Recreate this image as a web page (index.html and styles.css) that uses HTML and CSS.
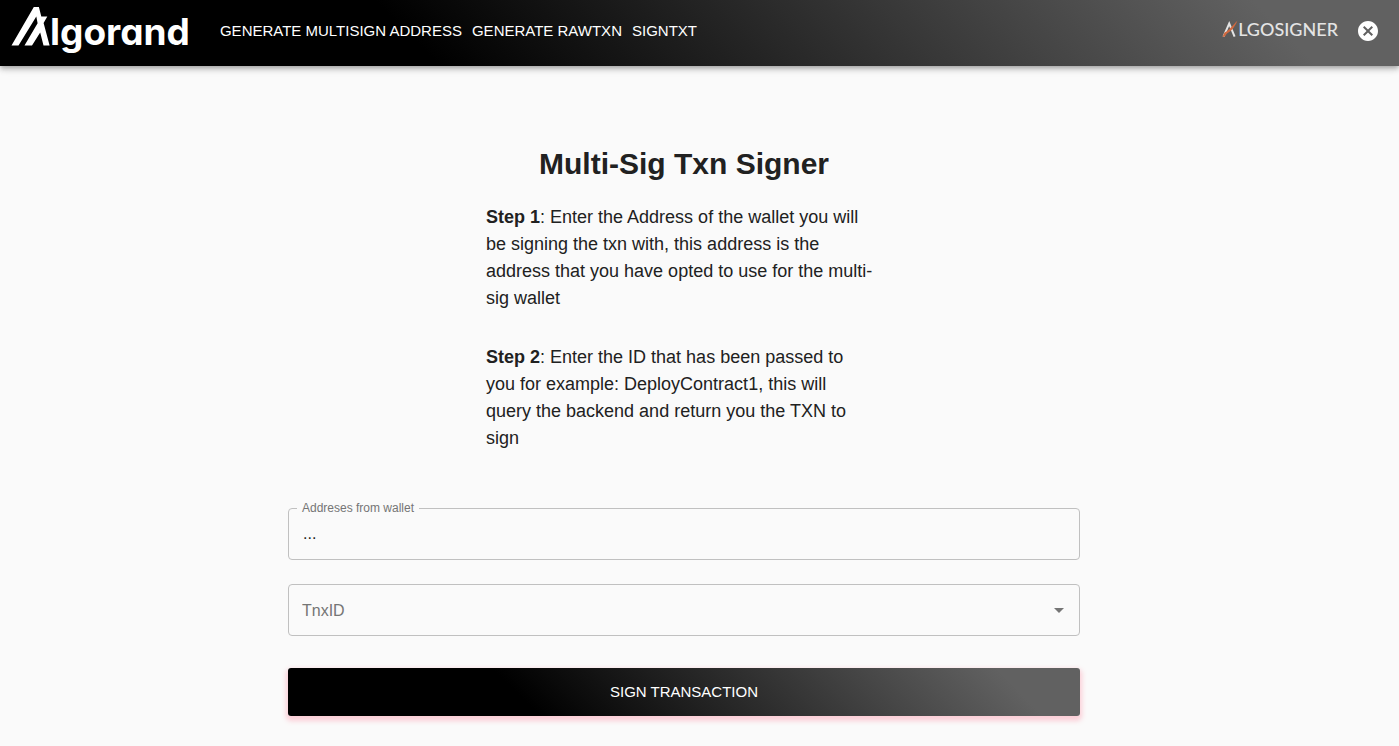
FILE: index.html
```html
<!DOCTYPE html>
<html lang="en">
<head>
<meta charset="utf-8">
<meta name="viewport" content="width=device-width, initial-scale=1">
<title>Multi-Sig Txn Signer</title>
<link rel="stylesheet" href="styles.css">
</head>
<body>
<header class="app-bar">
  <a class="logo" href="#" aria-label="Algorand">
    <svg class="logo-mark" viewBox="0 0 39 39" width="39" height="39" aria-hidden="true">
      <path fill="#fff" d="M.5 38.500 22.800 0H27.900L30.300 9.600H36.300L32.600 16 38.600 38.500H32.500L29.200 25.500 21 38.500H13.500L26.600 16.200 25.300 9.500 7.500 38.500Z"/>
    </svg>
    <span class="logo-text">lgorand</span>
  </a>
  <nav class="nav">
    <a class="nav-link" href="#">GENERATE MULTISIGN ADDRESS</a>
    <a class="nav-link" href="#">GENERATE RAWTXN</a>
    <a class="nav-link" href="#">SIGNTXT</a>
  </nav>
  <div class="wallet">
    <span class="signer">
      <svg class="signer-mark" viewBox="0 0 16 18" width="16" height="18" aria-hidden="true">
        <path d="M1.500 16.700 7.200 3.500 12.600 16.700" fill="none" stroke="#e4e4e4" stroke-width="2"/>
        <path d="M.5 16.700 2.500 12.500C7 10.500 10 6 15.500.5 12.500 8 9 11 5 13.500L2.500 16.700Z" fill="#d0693f"/>
      </svg>
      <span class="signer-text">LGOSIGNER</span>
    </span>
    <button class="close" type="button" aria-label="Disconnect">
      <svg viewBox="0 0 24 24" width="24" height="24" aria-hidden="true">
        <path fill="#fff" d="M12 2C6.470 2 2 6.470 2 12s4.470 10 10 10 10-4.470 10-10S17.530 2 12 2zm5 13.590L15.590 17 12 13.410 8.410 17 7 15.590 10.590 12 7 8.410 8.410 7 12 10.590 15.590 7 17 8.410 13.410 12 17 15.590z"/>
      </svg>
    </button>
  </div>
</header>
<main class="main">
  <div class="container">
    <h1 class="title">Multi-Sig Txn Signer</h1>
    <div class="steps">
      <p class="step"><b>Step 1</b>: Enter the Address of the wallet you will be signing the txn with, this address is the address that you have opted to use for the multi-sig wallet</p>
      <p class="step"><b>Step 2</b>: Enter the ID that has been passed to you for example: DeployContract1, this will query the backend and return you the TXN to sign</p>
    </div>
    <form class="form">
      <div class="field">
        <label class="field-label" for="address">Addreses from wallet</label>
        <input class="control" id="address" type="text" value="...">
      </div>
      <div class="field">
        <select class="control select" id="txn" aria-label="TnxID">
          <option>TnxID</option>
        </select>
        <svg class="arrow" viewBox="0 0 24 24" width="24" height="24" aria-hidden="true"><path fill="#757575" d="M7 10l5 5 5-5z"/></svg>
      </div>
      <button class="submit" type="button">SIGN TRANSACTION</button>
    </form>
  </div>
</main>
</body>
</html>
```
FILE: styles.css
```css
* {
  box-sizing: border-box;
}

body {
  margin: 0;
  background: #fafafa;
  color: #212121;
  font-family: "Liberation Sans", Arial, sans-serif;
}

.app-bar {
  position: relative;
  display: flex;
  align-items: center;
  height: 66px;
  padding: 0 19px 4px 11px;
  background: linear-gradient(45deg, #000 30%, #616161 90%);
  box-shadow: 0 2px 4px -1px rgba(0, 0, 0, 0.2), 0 4px 5px 0 rgba(0, 0, 0, 0.14), 0 1px 10px 0 rgba(0, 0, 0, 0.12);
}

.logo {
  display: flex;
  align-items: flex-start;
  height: 48px;
  color: #fff;
  text-decoration: none;
}

.logo-mark {
  display: block;
}

.logo-text {
  font: 700 37px/50px Inter, sans-serif;
  font-feature-settings: "cv11";
}

.nav {
  display: flex;
  gap: 10px;
  margin-left: 30px;
}

.nav-link {
  color: #fff;
  font-size: 15px;
  line-height: 24px;
  text-decoration: none;
}

.wallet {
  display: flex;
  align-items: center;
  gap: 18px;
  margin-left: auto;
}

.signer {
  display: flex;
  align-items: center;
  padding-bottom: 4px;
  color: #e4e4e4;
}

.signer-text {
  font: 500 18px/24px Lato, sans-serif;
}

.close {
  display: flex;
  padding: 0;
  border: 0;
  background: none;
  cursor: pointer;
}

.main {
  padding: 78px 31px 24px 0;
}

.container {
  max-width: 840px;
  margin: 0 auto;
  padding: 0 24px;
}

.title {
  margin: 0;
  font-size: 30px;
  line-height: 40px;
  text-align: center;
}

.steps {
  max-width: 396px;
  margin: 20px auto 0;
}

.step {
  max-width: 388px;
  margin: 0 0 32px;
  font-size: 18px;
  line-height: 27px;
}

.form {
  display: grid;
  gap: 24px;
  margin-top: 56px;
}

.field {
  position: relative;
}

.field-label {
  position: absolute;
  top: -8px;
  left: 9px;
  padding: 0 5px;
  background: #fafafa;
  color: #757575;
  font-size: 12px;
  line-height: 16px;
}

.control {
  display: block;
  width: 100%;
  height: 52px;
  padding: 0 14px;
  border: 1px solid #c0c0c0;
  border-radius: 4px;
  background: transparent;
  color: #212121;
  font: 16px/24px "Liberation Sans", Arial, sans-serif;
}

.select {
  padding: 2px 13px 0;
  appearance: none;
  color: #757575;
}

.arrow {
  position: absolute;
  top: 14px;
  right: 9px;
  pointer-events: none;
}

.submit {
  height: 48px;
  margin-top: 8px;
  border: 0;
  border-radius: 3px;
  background: linear-gradient(45deg, #000 30%, #616161 90%);
  box-shadow: 0 3px 5px 2px rgba(255, 105, 135, 0.3);
  color: #fff;
  font: 15px/24px "Liberation Sans", Arial, sans-serif;
  cursor: pointer;
}
```
